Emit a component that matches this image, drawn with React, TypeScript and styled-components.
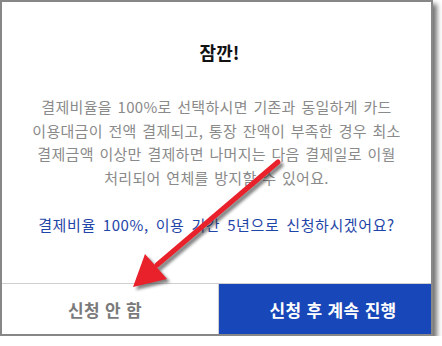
import React from 'react';
import styled, { createGlobalStyle } from 'styled-components';

const GlobalStyle = createGlobalStyle`
  html, body {
    margin: 0;
    padding: 0;
    background: #ffffff;
  }
  body {
    font-family: "Noto Sans CJK KR", "Noto Sans", sans-serif;
  }
`;

const Frame = styled.div`
  position: relative;
  width: 429px;
  height: 332px;
  border: 2px solid #878787;
  background: #fff;
  box-shadow: 4px 4px 5px rgba(0, 0, 0, 0.55);
  display: flex;
  flex-direction: column;
`;

const Body = styled.div`
  flex: 1;
  display: flex;
  flex-direction: column;
  align-items: center;
  padding-top: 38px;
  text-align: center;
`;

const Title = styled.h2`
  margin: 0 0 0 6px;
  font-size: 18px;
  line-height: 24px;
  font-weight: 700;
  color: #111;
`;

const Message = styled.p`
  margin: 31px 0 0;
  font-size: 15px;
  line-height: 23.5px;
  color: #8a8a8a;
  letter-spacing: 0.3px;
  word-spacing: 2px;
  white-space: nowrap;
`;

const Question = styled.p`
  margin: 24px 0 0;
  font-size: 15px;
  line-height: 24px;
  color: #1f45a8;
  letter-spacing: 0.6px;
  word-spacing: 3px;
  white-space: nowrap;
`;

const ButtonRow = styled.div`
  display: grid;
  grid-template-columns: 217px 1fr;
  border-top: 1px solid #cfcfcf;
  height: 50px;
`;

const Button = styled.button<{ primary?: boolean }>`
  border: none;
  margin: 0;
  padding: ${p => (p.primary ? '0 0 0 16px' : '0 10px 0 0')};
  font-family: "Noto Sans CJK KR", "Noto Sans", sans-serif;
  font-size: 17px;
  font-weight: 700;
  letter-spacing: 0.3px;
  word-spacing: 1px;
  cursor: pointer;
  background: ${p => (p.primary ? '#1747b8' : '#ffffff')};
  color: ${p => (p.primary ? '#ffffff' : '#7a7a7a')};
  border-right: ${p => (p.primary ? 'none' : '1px solid #cfcfcf')};
`;

const Arrow = styled.svg`
  position: absolute;
  left: 0;
  top: 0;
  pointer-events: none;
`;

const RedArrow: React.FC = () => (
  <Arrow width="429" height="332" viewBox="0 0 429 332">
    <defs>
      <filter id="sh" x="-20%" y="-20%" width="140%" height="140%">
        <feGaussianBlur stdDeviation="1.6" />
      </filter>
    </defs>
    <g transform="translate(3 3)" opacity="0.6" filter="url(#sh)">
      <line x1="276" y1="160" x2="155" y2="263" stroke="#333" strokeWidth="5" strokeLinecap="round" />
      <polygon points="131,285 143,252 165,277" fill="#333" />
    </g>
    <line x1="276" y1="160" x2="155" y2="263" stroke="#e8212b" strokeWidth="5" strokeLinecap="round" />
    <polygon points="131,285 143,252 165,277" fill="#e8212b" />
  </Arrow>
);

const App: React.FC = () => {
  return (
    <>
      <GlobalStyle />
      <Frame>
        <Body>
          <Title>잠깐!</Title>
          <Message>
            결제비율을 100%로 선택하시면 기존과 동일하게 카드
            <br />
            이용대금이 전액 결제되고, 통장 잔액이 부족한 경우 최소
            <br />
            결제금액 이상만 결제하면 나머지는 다음 결제일로 이월
            <br />
            처리되어 연체를 방지할 수 있어요.
          </Message>
          <Question>결제비율 100%, 이용 기간 5년으로 신청하시겠어요?</Question>
        </Body>
        <ButtonRow>
          <Button>신청 안 함</Button>
          <Button primary>신청 후 계속 진행</Button>
        </ButtonRow>
        <RedArrow />
      </Frame>
    </>
  );
};

export default App;
